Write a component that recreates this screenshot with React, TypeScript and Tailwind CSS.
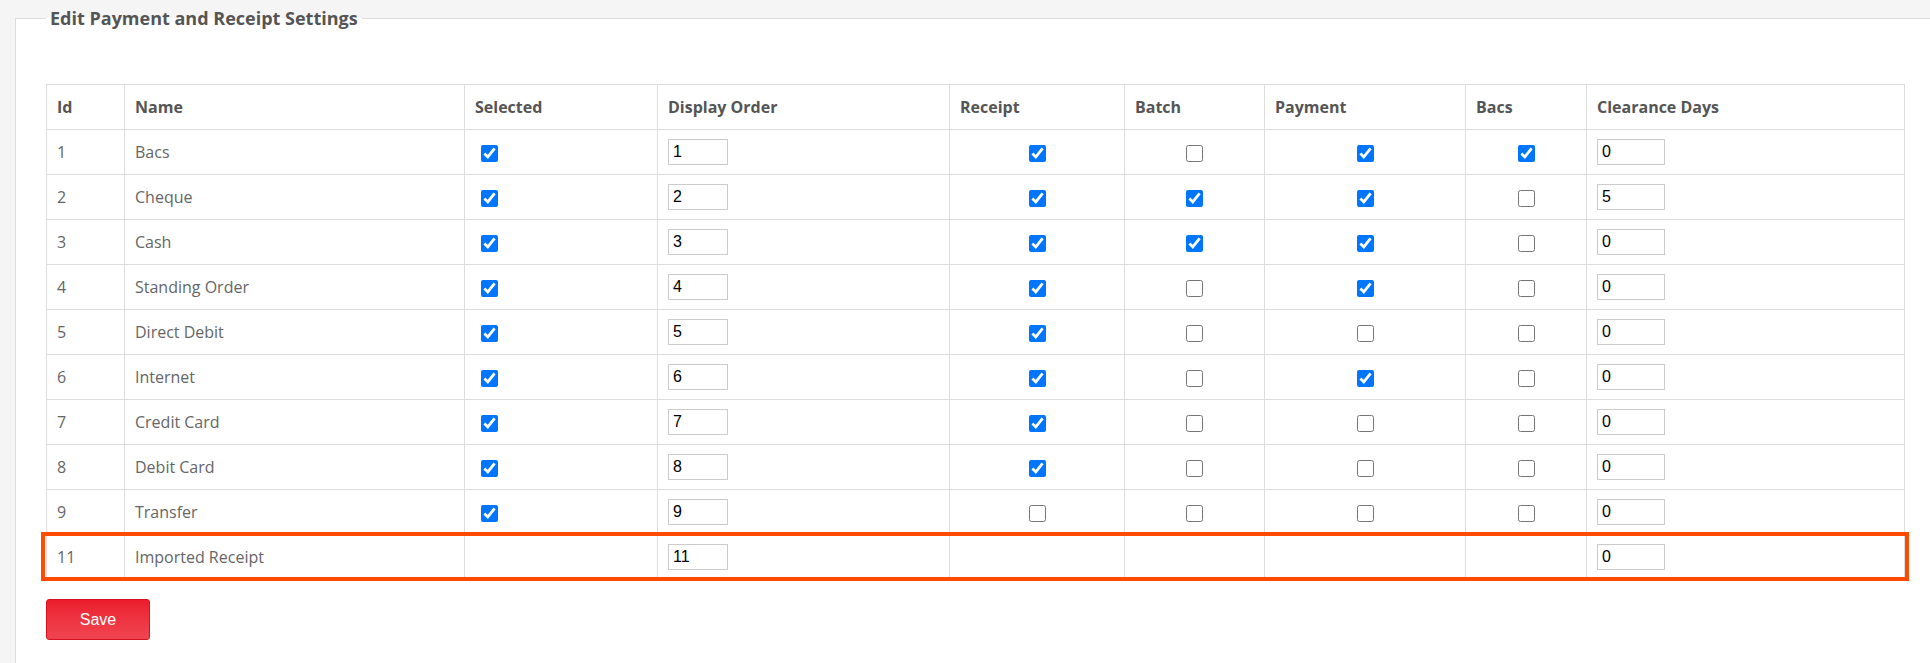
import React from "react";

type Row = { id: number; name: string; sel?: boolean; order: number; r?: boolean; b?: boolean; p?: boolean; bacs?: boolean; days: number; imported?: boolean };

const rows: Row[] = [
  { id: 1, name: "Bacs", sel: true, order: 1, r: true, b: false, p: true, bacs: true, days: 0 },
  { id: 2, name: "Cheque", sel: true, order: 2, r: true, b: true, p: true, bacs: false, days: 5 },
  { id: 3, name: "Cash", sel: true, order: 3, r: true, b: true, p: true, bacs: false, days: 0 },
  { id: 4, name: "Standing Order", sel: true, order: 4, r: true, b: false, p: true, bacs: false, days: 0 },
  { id: 5, name: "Direct Debit", sel: true, order: 5, r: true, b: false, p: false, bacs: false, days: 0 },
  { id: 6, name: "Internet", sel: true, order: 6, r: true, b: false, p: true, bacs: false, days: 0 },
  { id: 7, name: "Credit Card", sel: true, order: 7, r: true, b: false, p: false, bacs: false, days: 0 },
  { id: 8, name: "Debit Card", sel: true, order: 8, r: true, b: false, p: false, bacs: false, days: 0 },
  { id: 9, name: "Transfer", sel: true, order: 9, r: false, b: false, p: false, bacs: false, days: 0 },
  { id: 11, name: "Imported Receipt", order: 11, days: 0, imported: true },
];

function Box({ on }: { on?: boolean }) {
  return <input type="checkbox" defaultChecked={on} className="w-[17px] h-[17px] accent-[#0075ff] align-middle m-0" />;
}

const td = "border border-[#dddddd] px-[10px] h-[45px] align-middle";

export default function App() {
  return (
    <div className="w-[1930px] h-[663px] bg-[#f5f5f5] pt-[8px] overflow-hidden" style={{ fontFamily: '"Open Sans", sans-serif' }}>
      <fieldset className="ml-[15px] border-t border-l border-[#dddddd] bg-white h-[700px] pl-[30px] pr-0 relative">
        <legend className="ml-0 px-[4px] text-[18px] font-bold text-[#555555] leading-[20px]">Edit Payment and Receipt Settings</legend>
        <div className="relative mt-[56px] w-[1858px]">
          <table className="w-[1858px] border-collapse text-[16px] text-[#666666] table-fixed">
            <colgroup>
              <col className="w-[78px]" /><col className="w-[340px]" /><col className="w-[193px]" /><col className="w-[292px]" />
              <col className="w-[175px]" /><col className="w-[140px]" /><col className="w-[201px]" /><col className="w-[121px]" /><col className="w-[318px]" />
            </colgroup>
            <thead>
              <tr className="text-left font-bold text-[#555555]">
                {["Id", "Name", "Selected", "Display Order", "Receipt", "Batch", "Payment", "Bacs", "Clearance Days"].map((h) => (
                  <th key={h} className={`${td} h-[44px] font-bold`}>{h}</th>
                ))}
              </tr>
            </thead>
            <tbody>
              {rows.map((r) => (
                <tr key={r.id}>
                  <td className={td}>{r.id}</td>
                  <td className={td}>{r.name}</td>
                  <td className={`${td} pl-[16px]`}>{!r.imported && <Box on={r.sel} />}</td>
                  <td className={td}>
                    <input defaultValue={r.order} className="w-[60px] h-[26px] border border-[#cccccc] px-[4px] text-[16px] text-black align-middle" style={{ fontFamily: '"Liberation Sans", sans-serif' }} />
                  </td>
                  <td className={`${td} text-center`}>{!r.imported && <Box on={r.r} />}</td>
                  <td className={`${td} text-center`}>{!r.imported && <Box on={r.b} />}</td>
                  <td className={`${td} text-center`}>{!r.imported && <Box on={r.p} />}</td>
                  <td className={`${td} text-center`}>{!r.imported && <Box on={r.bacs} />}</td>
                  <td className={td}>
                    <input defaultValue={r.days} className="w-[68px] h-[26px] border border-[#cccccc] px-[4px] text-[16px] text-black align-middle" style={{ fontFamily: '"Liberation Sans", sans-serif' }} />
                  </td>
                </tr>
              ))}
            </tbody>
          </table>
          <div className="absolute left-[-5px] top-[448px] w-[1868px] h-[49px] border-[4px] border-[#ff4a00] pointer-events-none" />
        </div>
        <button className="mt-[19px] w-[104px] h-[41px] rounded-[3px] border border-[#d8101f] bg-gradient-to-b from-[#ec1c2c] to-[#f04452] text-white text-[16px]" style={{ fontFamily: '"Liberation Sans", sans-serif' }}>Save</button>
      </fieldset>
    </div>
  );
}
